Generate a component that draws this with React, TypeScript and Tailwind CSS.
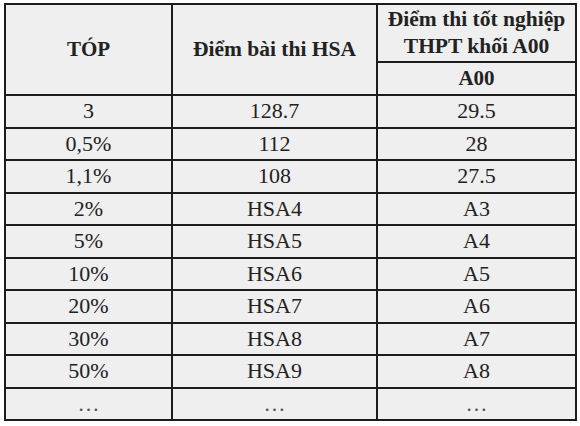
const rows: [string, string, string][] = [
  ["3", "128.7", "29.5"],
  ["0,5%", "112", "28"],
  ["1,1%", "108", "27.5"],
  ["2%", "HSA4", "A3"],
  ["5%", "HSA5", "A4"],
  ["10%", "HSA6", "A5"],
  ["20%", "HSA7", "A6"],
  ["30%", "HSA8", "A7"],
  ["50%", "HSA9", "A8"],
  ["…", "…", "…"],
];

export default function App() {
  return (
    <div className="w-[580px] h-[426px] bg-white pl-[4px] pt-[3px] [font-family:'Liberation_Serif',serif] text-[#222]">
      <table className="border-collapse border-2 border-[#1c1c1c] bg-[#efefef] table-fixed w-[571px]">
        <colgroup>
          <col className="w-[167px]" />
          <col className="w-[205px]" />
          <col className="w-[199px]" />
        </colgroup>
        <thead>
          <tr className="h-[58px]">
            <th rowSpan={2} className="border-2 border-[#1c1c1c] text-[21px] font-bold leading-none">
              TÓP
            </th>
            <th rowSpan={2} className="border-2 border-[#1c1c1c] text-[21.5px] font-bold leading-none">
              Điểm bài thi HSA
            </th>
            <th className="border-2 border-[#1c1c1c] text-[21.5px] font-bold leading-[27px]">
              Điểm thi tốt nghiệp
              <br />
              THPT khối A00
            </th>
          </tr>
          <tr className="h-[33px]">
            <th className="border-2 border-[#1c1c1c] text-[21px] font-bold leading-none">A00</th>
          </tr>
        </thead>
        <tbody>
          {rows.map((r, i) => (
            <tr key={i} className="h-[32.5px]">
              {r.map((c, j) => (
                <td
                  key={j}
                  className={
                    "border-2 border-[#1c1c1c] text-center text-[22px] leading-none " +
                    (c === "…" ? "align-bottom pb-[4px] text-[16px] text-[#555]" : "")
                  }
                >
                  {c}
                </td>
              ))}
            </tr>
          ))}
        </tbody>
      </table>
    </div>
  );
}
